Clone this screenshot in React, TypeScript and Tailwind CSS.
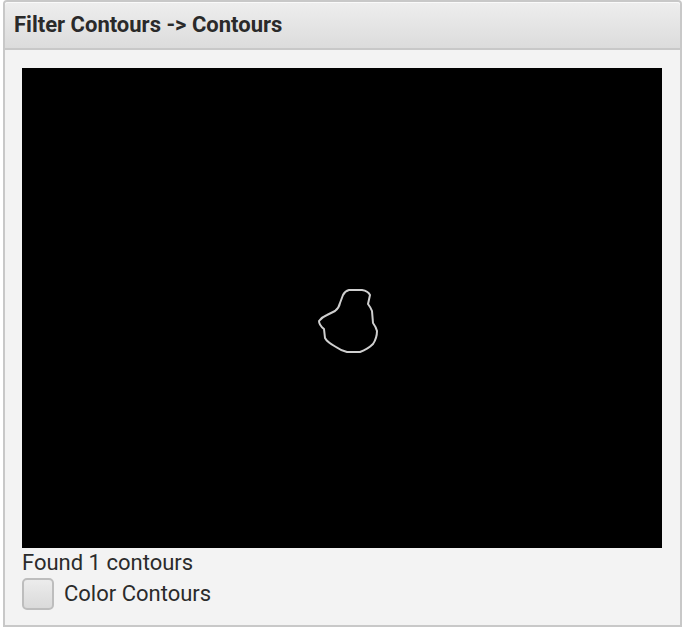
import React from "react";

export default function App() {
  return (
    <div className="w-[686px] h-[632px] bg-white pl-[3px]" style={{ fontFamily: "Roboto, 'Liberation Sans', sans-serif" }}>
      <div className="w-[679px] h-[627px] border-2 border-[#c8c8c8] rounded-t-[4px] bg-[#f3f3f3] flex flex-col">
        <div className="h-[48px] shrink-0 border-b-2 border-[#c8c8c8] bg-gradient-to-b from-[#eeeeee] to-[#dcdcdc] rounded-t-[3px] flex items-center pl-[9px] shadow-[inset_0_1px_0_#fafafa]">
          <span className="text-[22px] font-bold text-[#2a2a2a] leading-none">Filter Contours -&gt; Contours</span>
        </div>
        <div className="pl-[17px] pt-[18px] flex flex-col">
          <div className="w-[640px] h-[480px] bg-black">
            <svg width="640" height="480" viewBox="0 0 640 480">
              <path
                d="M321 227 Q323 223 327 222 L340 222 Q346 223 348 227 L346 236 Q349 240 350 243 L351 255 Q354 259 355 263 Q355 270 351 276 Q346 281 338 284 L325 284 Q318 282 314 279 Q305 274 303 270 L302 261 Q297 257 297 253 Q300 249 305 247 L313 243 Q317 240 318 235 Z"
                fill="none"
                stroke="#cfcfcf"
                strokeWidth="2"
                strokeLinejoin="round"
              />
            </svg>
          </div>
          <div className="text-[22px] text-[#2b2b2b] leading-[26px] mt-[2px]">Found 1 contours</div>
          <div className="flex items-center mt-[2px]">
            <div className="w-[32px] h-[32px] rounded-[5px] border-2 border-[#bdbdbd] bg-gradient-to-b from-[#ececec] to-[#dadada]" />
            <span className="ml-[10px] text-[22px] text-[#2b2b2b] leading-none">Color Contours</span>
          </div>
        </div>
      </div>
    </div>
  );
}
